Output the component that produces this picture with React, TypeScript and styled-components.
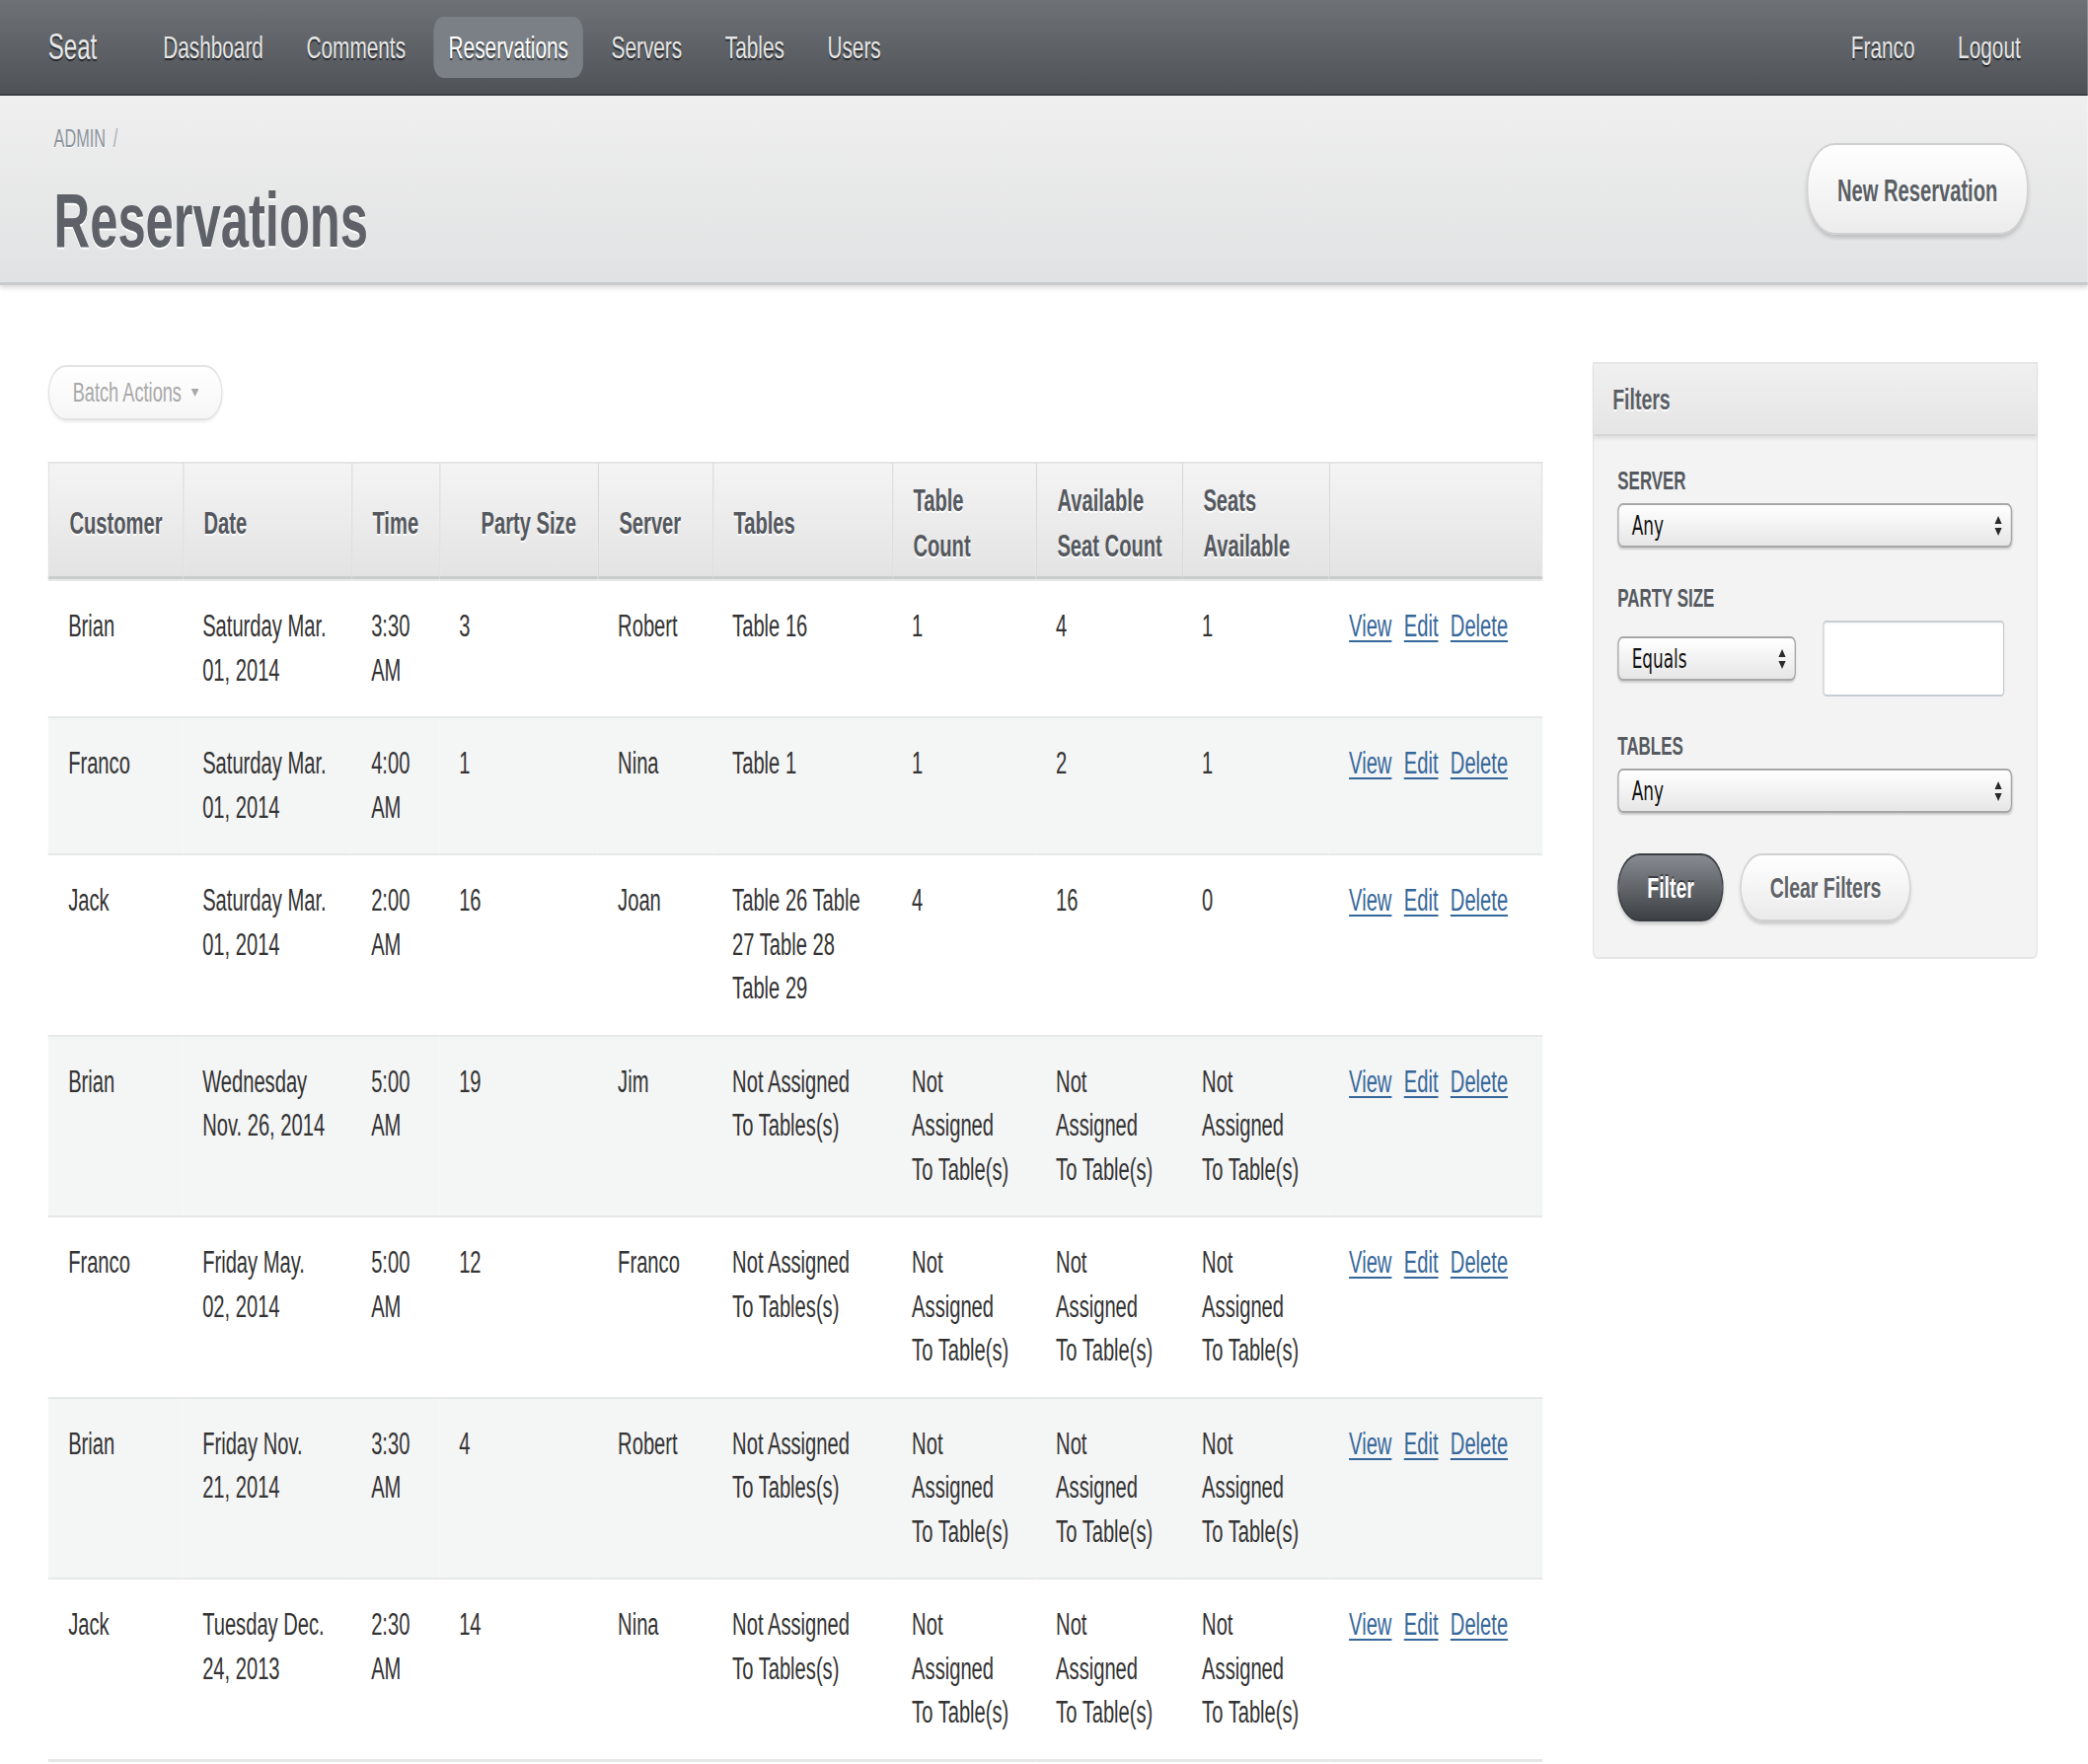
import React from "react";
import styled, { createGlobalStyle } from "styled-components";

/* The reference capture is horizontally condensed (x : y = 0.65 : 1).
   The page is laid out in flow at a wider width and condensed once. */
const SX = 0.65;
const fx = (fullPx: number) => `${fullPx / SX}px`;

const GlobalStyle = createGlobalStyle`
  html, body { margin: 0; padding: 0; background: #ffffff; overflow: hidden; }
  body { font-family: "Liberation Sans", Arial, Helvetica, sans-serif; color: #333333; }
  *, *::before, *::after { box-sizing: border-box; }
`;

const Stage = styled.div`
  width: ${fx(2116)};
  transform: scaleX(${SX});
  transform-origin: 0 0;
`;

const NavBar = styled.nav`
  display: flex;
  align-items: center;
  height: 97px;
  padding: 0 82px 0 75px;
  background: linear-gradient(#6e7277, #4f5358);
  border-bottom: 2px solid #3d4044;
`;

const Brand = styled.a`
  font-size: 37px;
  color: #e8e8e8;
  text-decoration: none;
  text-shadow: 0 2px 1px rgba(0, 0, 0, 0.6);
  margin-right: 80px;
`;

const NavGroup = styled.div<{ $right?: boolean }>`
  display: flex;
  gap: 21px;
  margin-left: ${(p) => (p.$right ? "auto" : "0")};
`;

const NavLink = styled.a<{ $active?: boolean }>`
  display: block;
  height: 62px;
  line-height: 62px;
  padding: 0 23px;
  border-radius: 15px;
  font-size: 32px;
  text-decoration: none;
  color: ${(p) => (p.$active ? "#ffffff" : "#e6e6e6")};
  background: ${(p) => (p.$active ? "#7b8086" : "transparent")};
  text-shadow: 0 2px 1px rgba(0, 0, 0, 0.6);
`;

const PageHeader = styled.header`
  display: flex;
  align-items: center;
  justify-content: space-between;
  height: 192px;
  padding: 0 93px 0 84px;
  background: linear-gradient(#efefef, #e1e2e3);
  border-bottom: 3px solid #c9cacb;
  box-shadow: 0 3px 6px rgba(0, 0, 0, 0.14);
`;

const TitleBlock = styled.div`
  align-self: flex-start;
  padding-top: 25px;
`;

const Breadcrumb = styled.div`
  font-size: 25px;
  line-height: 36px;
  color: #8b939c;
  text-shadow: 0 1px 0 #ffffff;
`;

const Divider = styled.span`
  color: #a3a9b0;
  margin-left: 12px;
`;

const Title = styled.h1`
  margin: 20px 0 0;
  font-size: 78px;
  line-height: 90px;
  font-weight: bold;
  color: #5e6268;
  text-shadow: 0 2px 0 #ffffff;
`;

const PillButton = styled.button`
  height: 93px;
  padding: 4px 46px 0;
  border-radius: 44px;
  border: 2px solid #cfd0d1;
  background: linear-gradient(#ffffff, #ececec);
  font-family: "Liberation Sans", Arial, sans-serif;
  font-weight: bold;
  font-size: 31px;
  color: #5a5f65;
  text-shadow: 0 2px 0 #ffffff;
  box-shadow: 0 3px 5px rgba(0, 0, 0, 0.18);
`;

const Main = styled.main`
  display: grid;
  grid-template-columns: 1fr ${fx(451)};
  gap: ${fx(51)};
  padding: 78px ${fx(51)} 0 ${fx(49)};
  align-items: start;
`;

const BatchButton = styled.button`
  display: inline-flex;
  align-items: center;
  gap: 15px;
  height: 56px;
  margin-top: 3px;
  padding: 0 35px 0 36px;
  border: 2px solid #e3e3e3;
  border-radius: 28px;
  background: linear-gradient(#ffffff, #f6f6f6);
  font-family: "Liberation Sans", Arial, sans-serif;
  font-size: 28px;
  color: #a8a8a8;
  box-shadow: 0 2px 3px rgba(0, 0, 0, 0.07);
`;

const DataTable = styled.table`
  width: 100%;
  margin-top: 42px;
  border-collapse: separate;
  border-spacing: 0;
  table-layout: fixed;
  font-size: 31px;
  line-height: 44.5px;
`;

const Col = styled.col<{ $w: number }>`
  width: ${(p) => fx(p.$w)};
`;

const HeadCell = styled.th<{ $right?: boolean }>`
  padding: 15px ${(p) => (p.$right ? "34px" : "18px")} 7px 31px;
  text-align: ${(p) => (p.$right ? "right" : "left")};
  vertical-align: middle;
  font-weight: bold;
  line-height: 46px;
  color: #54585e;
  text-shadow: 0 2px 0 #ffffff;
  background: linear-gradient(#f4f4f4, #e3e3e3);
  border-top: 2px solid #e4e4e4;
  border-bottom: 3px solid #cbcccd;
  border-left: 2px solid #d9dadb;
  &:first-child {
    border-left: 2px solid #e2e2e2;
  }
  &:last-child {
    border-right: 2px solid #e2e2e2;
  }
`;

const Row = styled.tr`
  &:last-child td {
    border-bottom: 3px solid #e6e7e7;
  }
`;

const Cell = styled.td<{ $striped?: boolean }>`
  padding: 24px 31px;
  vertical-align: top;
  color: #333333;
  border-top: 2px solid #e7e8e8;
  background: ${(p) => (p.$striped ? "#f4f5f5" : "#ffffff")};
`;

const Actions = styled.div`
  display: flex;
  gap: 19px;
  white-space: nowrap;
`;

const ActionLink = styled.a`
  color: #36679a;
  text-decoration: underline;
  text-decoration-thickness: 2px;
  text-underline-offset: 4px;
`;

const Panel = styled.aside`
  background: #f3f3f3;
  border: 2px solid #e5e5e5;
  border-radius: 0 0 8px 8px;
`;

const PanelHead = styled.div`
  display: flex;
  align-items: center;
  height: 73px;
  padding: 0 29px;
  background: linear-gradient(#f0f0f0, #e5e5e5);
  border-bottom: 2px solid #d5d5d5;
  box-shadow: 0 3px 4px rgba(0, 0, 0, 0.08);
  font-size: 30px;
  font-weight: bold;
  color: #5b5f65;
  text-shadow: 0 2px 0 #ffffff;
`;

const PanelBody = styled.div`
  padding: 25px 38px 36px 37px;
`;

const Field = styled.div<{ $gap: number }>`
  margin-bottom: ${(p) => p.$gap}px;
`;

const Label = styled.label`
  display: block;
  margin-bottom: 3px;
  font-size: 26px;
  line-height: 40px;
  font-weight: bold;
  text-transform: uppercase;
  color: #555a60;
`;

const SelectBox = styled.div<{ $width?: number }>`
  display: flex;
  align-items: center;
  justify-content: space-between;
  width: ${(p) => (p.$width ? `${p.$width}px` : "100%")};
  height: 45px;
  padding: 0 13px 0 20px;
  border: 2px solid #a7a7a7;
  border-radius: 8px;
  background: linear-gradient(#ffffff 0%, #f4f4f4 45%, #e6e6e6 100%);
  box-shadow: 0 2px 2px rgba(0, 0, 0, 0.15);
  font-family: "DejaVu Sans", "Liberation Sans", sans-serif;
  font-size: 26px;
  color: #111111;
`;

const PartyRow = styled.div`
  display: flex;
  align-items: center;
  gap: 42px;
`;

const TextInput = styled.input`
  width: 283px;
  height: 77px;
  border: 2px solid #c8cdd4;
  border-radius: 5px;
  background: #ffffff;
  box-shadow: inset 0 1px 2px rgba(0, 0, 0, 0.06);
`;

const ButtonRow = styled.div`
  display: flex;
  gap: 26px;
`;

const FormButton = styled.button<{ $primary?: boolean }>`
  height: 69px;
  padding: 0 44px;
  border-radius: 35px;
  font-family: "Liberation Sans", Arial, sans-serif;
  font-weight: bold;
  font-size: 30px;
  border: 2px solid ${(p) => (p.$primary ? "#3a3d41" : "#d0d0d0")};
  color: ${(p) => (p.$primary ? "#ffffff" : "#5f6368")};
  background: ${(p) =>
    p.$primary ? "linear-gradient(#878b91, #3d4145)" : "linear-gradient(#ffffff, #eaeaea)"};
  text-shadow: ${(p) => (p.$primary ? "0 -2px 0 rgba(0,0,0,0.45)" : "0 2px 0 #ffffff")};
  box-shadow: 0 3px 4px rgba(0, 0, 0, 0.16);
`;

const Caret = () => (
  <svg width="12" height="8" viewBox="0 0 12 8">
    <polygon points="0,0 12,0 6,8" fill="#a8a8a8" />
  </svg>
);

const UpDown = () => (
  <svg width="13" height="22" viewBox="0 0 13 22">
    <polygon points="1,9 6.5,1 12,9" fill="#2a2a2a" />
    <polygon points="1,13 6.5,21 12,13" fill="#2a2a2a" />
  </svg>
);

type Reservation = {
  customer: string;
  date: string;
  time: string;
  party: string;
  server: string;
  tables: string;
  tableCount: string;
  seatCount: string;
  seatsAvailable: string;
};

const NA = "Not Assigned To Table(s)";
const NAT = "Not Assigned To Tables(s)";

const rows: Reservation[] = [
  { customer: "Brian", date: "Saturday Mar. 01, 2014", time: "3:30 AM", party: "3", server: "Robert", tables: "Table 16", tableCount: "1", seatCount: "4", seatsAvailable: "1" },
  { customer: "Franco", date: "Saturday Mar. 01, 2014", time: "4:00 AM", party: "1", server: "Nina", tables: "Table 1", tableCount: "1", seatCount: "2", seatsAvailable: "1" },
  { customer: "Jack", date: "Saturday Mar. 01, 2014", time: "2:00 AM", party: "16", server: "Joan", tables: "Table 26 Table 27 Table 28 Table 29", tableCount: "4", seatCount: "16", seatsAvailable: "0" },
  { customer: "Brian", date: "Wednesday Nov. 26, 2014", time: "5:00 AM", party: "19", server: "Jim", tables: NAT, tableCount: NA, seatCount: NA, seatsAvailable: NA },
  { customer: "Franco", date: "Friday May. 02, 2014", time: "5:00 AM", party: "12", server: "Franco", tables: NAT, tableCount: NA, seatCount: NA, seatsAvailable: NA },
  { customer: "Brian", date: "Friday Nov. 21, 2014", time: "3:30 AM", party: "4", server: "Robert", tables: NAT, tableCount: NA, seatCount: NA, seatsAvailable: NA },
  { customer: "Jack", date: "Tuesday Dec. 24, 2013", time: "2:30 AM", party: "14", server: "Nina", tables: NAT, tableCount: NA, seatCount: NA, seatsAvailable: NA },
];

/* column widths as they appear in the capture (screen px) */
const colWidths = [136, 171, 89, 161, 116, 182, 146, 148, 149, 216];

export default function App() {
  return (
    <>
      <GlobalStyle />
      <Stage>
        <NavBar>
          <Brand href="#">Seat</Brand>
          <NavGroup>
            <NavLink href="#">Dashboard</NavLink>
            <NavLink href="#">Comments</NavLink>
            <NavLink href="#" $active>Reservations</NavLink>
            <NavLink href="#">Servers</NavLink>
            <NavLink href="#">Tables</NavLink>
            <NavLink href="#">Users</NavLink>
          </NavGroup>
          <NavGroup $right>
            <NavLink href="#">Franco</NavLink>
            <NavLink href="#">Logout</NavLink>
          </NavGroup>
        </NavBar>

        <PageHeader>
          <TitleBlock>
            <Breadcrumb>
              ADMIN<Divider>/</Divider>
            </Breadcrumb>
            <Title>Reservations</Title>
          </TitleBlock>
          <PillButton>New Reservation</PillButton>
        </PageHeader>

        <Main>
          <section>
            <BatchButton>
              Batch Actions
              <Caret />
            </BatchButton>
            <DataTable>
              <colgroup>
                {colWidths.map((w, i) => (
                  <Col key={i} $w={w} />
                ))}
              </colgroup>
              <thead>
                <tr>
                  <HeadCell>Customer</HeadCell>
                  <HeadCell>Date</HeadCell>
                  <HeadCell>Time</HeadCell>
                  <HeadCell $right>Party Size</HeadCell>
                  <HeadCell>Server</HeadCell>
                  <HeadCell>Tables</HeadCell>
                  <HeadCell>
                    Table
                    <br />
                    Count
                  </HeadCell>
                  <HeadCell>
                    Available
                    <br />
                    Seat Count
                  </HeadCell>
                  <HeadCell>
                    Seats
                    <br />
                    Available
                  </HeadCell>
                  <HeadCell />
                </tr>
              </thead>
              <tbody>
                {rows.map((r, i) => {
                  const s = i % 2 === 1;
                  return (
                    <Row key={i}>
                      <Cell $striped={s}>{r.customer}</Cell>
                      <Cell $striped={s}>{r.date}</Cell>
                      <Cell $striped={s}>{r.time}</Cell>
                      <Cell $striped={s}>{r.party}</Cell>
                      <Cell $striped={s}>{r.server}</Cell>
                      <Cell $striped={s}>{r.tables}</Cell>
                      <Cell $striped={s}>{r.tableCount}</Cell>
                      <Cell $striped={s}>{r.seatCount}</Cell>
                      <Cell $striped={s}>{r.seatsAvailable}</Cell>
                      <Cell $striped={s}>
                        <Actions>
                          <ActionLink href="#">View</ActionLink>
                          <ActionLink href="#">Edit</ActionLink>
                          <ActionLink href="#">Delete</ActionLink>
                        </Actions>
                      </Cell>
                    </Row>
                  );
                })}
              </tbody>
            </DataTable>
          </section>

          <Panel>
            <PanelHead>Filters</PanelHead>
            <PanelBody>
              <Field $gap={31}>
                <Label>Server</Label>
                <SelectBox>
                  <span>Any</span>
                  <UpDown />
                </SelectBox>
              </Field>
              <Field $gap={30}>
                <Label>Party Size</Label>
                <PartyRow>
                  <SelectBox $width={278}>
                    <span>Equals</span>
                    <UpDown />
                  </SelectBox>
                  <TextInput type="text" />
                </PartyRow>
              </Field>
              <Field $gap={41}>
                <Label>Tables</Label>
                <SelectBox>
                  <span>Any</span>
                  <UpDown />
                </SelectBox>
              </Field>
              <ButtonRow>
                <FormButton $primary>Filter</FormButton>
                <FormButton>Clear Filters</FormButton>
              </ButtonRow>
            </PanelBody>
          </Panel>
        </Main>
      </Stage>
    </>
  );
}
